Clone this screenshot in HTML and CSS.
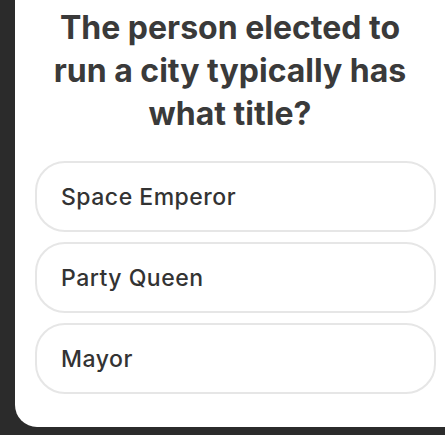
FILE: index.html
```html
<!DOCTYPE html>
<html>
<head>
<meta charset="utf-8">
<link rel="stylesheet" href="styles.css">
</head>
<body>
<div class="card">
  <h1 class="question">The person elected to<br>run a city typically has<br>what title?</h1>
  <div class="options">
    <div class="option">Space Emperor</div>
    <div class="option">Party Queen</div>
    <div class="option">Mayor</div>
  </div>
</div>
</body>
</html>
```
FILE: styles.css
```css
html, body {
  margin: 0;
  padding: 0;
  background: #2b2b2b;
  height: 435px;
  overflow: hidden;
}
body {
  font-family: Inter, "Noto Sans", sans-serif;
}
.card {
  margin-left: 15px;
  width: 430px;
  height: 427px;
  background: #ffffff;
  border-bottom-left-radius: 22px;
  box-sizing: border-box;
  padding-top: 6px;
}
.question {
  margin: 0;
  text-align: center;
  font-size: 32px;
  line-height: 43px;
  font-weight: 700;
  color: #3a3a3a;
}
.options {
  margin-top: 26px;
  margin-left: 20px;
  width: 401px;
  display: flex;
  flex-direction: column;
  gap: 10px;
}
.option {
  height: 71px;
  box-sizing: border-box;
  border: 2px solid #e6e6e6;
  border-radius: 30px;
  display: flex;
  align-items: center;
  padding-left: 24px;
  font-size: 23px;
  letter-spacing: 0.5px;
  font-weight: 500;
  color: #333333;
}
```
